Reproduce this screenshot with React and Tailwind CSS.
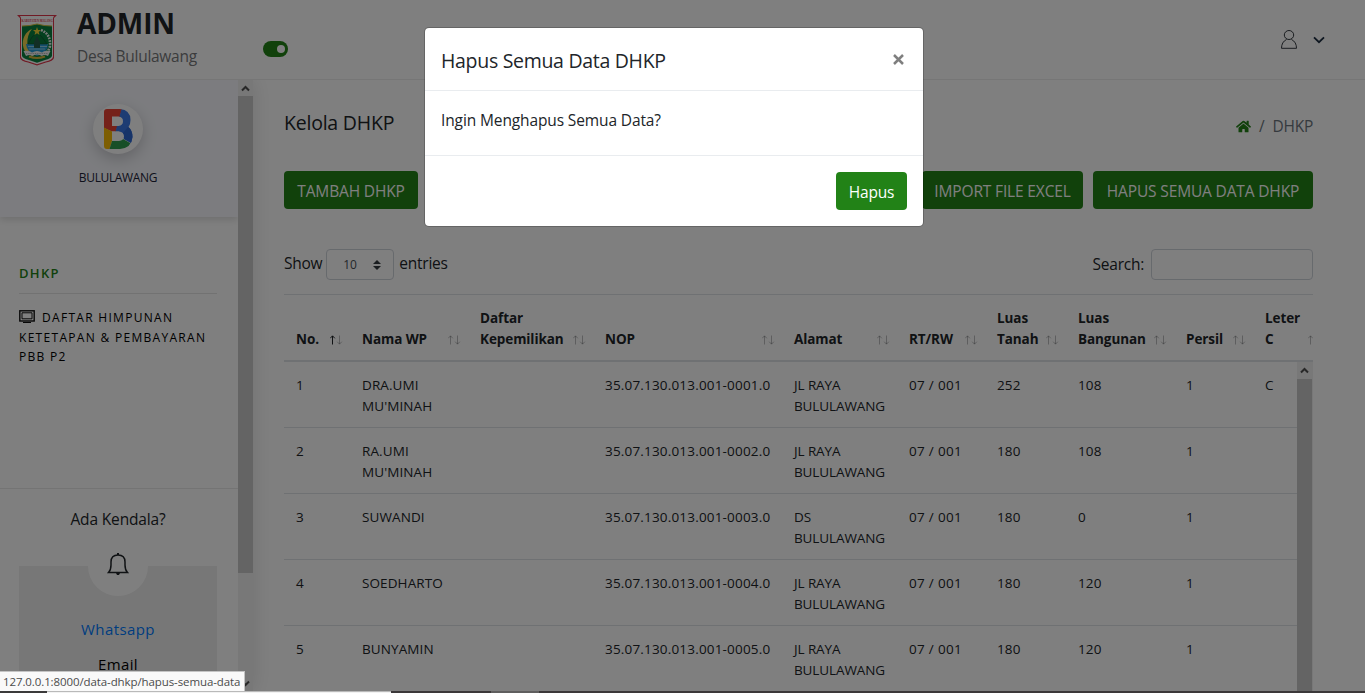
import React from "react";
import { FaHome } from "react-icons/fa";

const columns = [
  { label: "No.", active: true },
  { label: "Nama\u00a0WP" },
  { label: "Daftar Kepemilikan" },
  { label: "NOP" },
  { label: "Alamat" },
  { label: "RT/RW" },
  { label: "Luas Tanah" },
  { label: "Luas Bangunan" },
  { label: "Persil" },
  { label: "Leter C" },
];

const rows = [
  ["1", "DRA.UMI MU'MINAH", "", "35.07.130.013.001-0001.0", "JL RAYA BULULAWANG", "07 / 001", "252", "108", "1", "C"],
  ["2", "RA.UMI MU'MINAH", "", "35.07.130.013.001-0002.0", "JL RAYA BULULAWANG", "07 / 001", "180", "108", "1", ""],
  ["3", "SUWANDI", "", "35.07.130.013.001-0003.0", "DS BULULAWANG", "07 / 001", "180", "0", "1", ""],
  ["4", "SOEDHARTO", "", "35.07.130.013.001-0004.0", "JL RAYA BULULAWANG", "07 / 001", "180", "120", "1", ""],
  ["5", "BUNYAMIN", "", "35.07.130.013.001-0005.0", "JL RAYA BULULAWANG", "07 / 001", "180", "120", "1", ""],
];

const grid = "grid grid-cols-[66px_118px_125px_189px_115px_88px_81px_108px_79px_75px] w-[1044px]";

const cellClass = (i) => {
  if (i === 1) return "px-3 tracking-[0.1px]";
  if (i === 4) return "px-3 tracking-[-0.1px]";
  if (i === 3) return "pl-3 tracking-[0.18px] whitespace-nowrap";
  if (i === 5) return "pl-3 tracking-[0.3px] whitespace-nowrap";
  return "pl-3 tracking-[0.1px] whitespace-nowrap";
};

function Crest() {
  return (
    <svg viewBox="0 0 40 51" className="h-[51px] w-10">
      <path d="M0 0H40L37 3V43Q36 46 29 47.500L20 50.500L11 47.500Q4 46 3 43V3Z" fill="#e0374b" />
      <path d="M3 1H37L36 3V42Q35 45 28.500 46.500L20 49.200L11.500 46.500Q5 45 4 42V3Z" fill="#fff" />
      <text x="4.600" y="7.300" fontSize="4.800" fontWeight="bold" textLength="31" lengthAdjust="spacingAndGlyphs" fill="#e0374b" fontFamily="Liberation Serif, serif">KABUPATEN MALANG</text>
      <path d="M5 11Q13 11 20 9Q27 11 35 11V41Q34 43.500 28 45L20 47.800L12 45Q6 43.500 5 41Z" fill="#08803f" />
      <path d="M5 11Q13 11 20 9Q27 11 35 11" fill="none" stroke="#d6c13c" strokeWidth="1" />
      <path d="M15 14C5 18 3 32 10 38C12 40 15 41 17 41C9 36 8 22 15 14Z" fill="#f0d44e" />
      <path d="M24 15Q34 19 33 31Q32 35 30 37" fill="none" stroke="#f3f3f3" strokeWidth="2.600" strokeDasharray="1.800 1" />
      <path d="M9 29H31Q31 38 20 41Q10 38 9 29Z" fill="#2b9fd8" />
      <path d="M11 31.500H30M12 34H28" stroke="#bfe6f5" strokeWidth=".7" />
      <path d="M11 29L15 22L20 17.500L25 22L30 29Z" fill="#0b7a3c" stroke="#124d2c" strokeWidth=".6" />
      <path d="M17 33V27L20 21L23 27V33Z" fill="#245c4a" />
      <path d="M20 12L21 15L24 15L21.700 17L22.500 20L20 18.200L17.500 20L18.300 17L16 15L19 15Z" fill="#f3d434" />
      <path d="M6.500 36Q13 35 15 37.500Q20 34.500 25 37.500Q27 35 33.500 36L31 41Q27 39 25 41Q20 38 15 41Q13 39 9 41Z" fill="#f4f4f4" />
      <path d="M9 38.500H31" stroke="#888" strokeWidth=".6" strokeDasharray="1 .8" />
      <path d="M12 41.500Q20 44.500 28 41.500" fill="none" stroke="#d6b83a" strokeWidth="2" />
    </svg>
  );
}

function BrandB() {
  return (
    <svg viewBox="0 0 29 40" className="h-10 w-[29px]">
      <clipPath id="brand-b">
        <path clipRule="evenodd" d="M3 0H16Q26.500 1 26.500 11Q26.500 15.500 24.500 18Q28.500 21.500 28.500 28Q27.500 39 16 40H3Q0 40 0 37V3Q0 0 3 0ZM8 7.500V17H14.500Q19 16.500 19 12.200Q19 8 14.500 7.500ZM8 22.500V32H15Q20 31.500 20 27.200Q20 23 15 22.500Z" />
      </clipPath>
      <g clipPath="url(#brand-b)">
        <path d="M0 0H18L12 22.500H8L0 19Z" fill="#ea4335" />
        <path d="M17.500 0H29V35L20 30L15 22.500H11.500Z" fill="#3b78e7" />
        <path d="M24 18L29 20V35L20 30L19 24Z" fill="#2f68d2" />
        <path d="M0 18.500L8 22.500V32L5.500 40H0Z" fill="#fbbc05" />
        <path d="M8 32L19 30L27 34.500L24 40H5.500Z" fill="#2f9e4f" />
      </g>
    </svg>
  );
}

function UpArrow() {
  return (
    <svg viewBox="0 0 9 7" className="h-[7px] w-[9px]">
      <path d="M1 5.500L4.500 2L8 5.500" fill="none" stroke="#505050" strokeWidth="2" />
    </svg>
  );
}

function SortArrows({ active }) {
  return (
    <svg viewBox="0 0 13 10" className="h-[10px] w-[13px]" fill="none" stroke="#212529">
      <path d="M2.500 9.500V1M.2 3.300L2.500 .8L4.800 3.300" strokeOpacity={active ? 1 : 0.3} />
      <path d="M9.500 .5V9M7.200 6.700L9.500 9.200L11.800 6.700" strokeOpacity=".3" />
    </svg>
  );
}

function Header() {
  return (
    <header className="flex h-20 shrink-0 items-start border-b border-[#ededed] bg-white">
      <div className="pt-[15px] pl-[17px]"><Crest /></div>
      <div className="ml-5 w-[186px] pt-[6px]">
        <h1 className="text-[28px] leading-[34px] font-bold tracking-[-0.1px]">ADMIN</h1>
        <p className="mt-1 text-[15.500px] leading-6 tracking-[-0.28px] text-[#77797b]">Desa Bululawang</p>
      </div>
      <div className="mt-[41px] flex h-4 w-[25px] items-center justify-end rounded-full bg-[#228217] pr-[3px]">
        <span className="size-2 rounded-full bg-white" />
      </div>
      <div className="mt-[30px] mr-10 ml-auto flex items-center gap-4">
        <svg viewBox="0 0 16 19" className="mb-px h-[19px] w-4" fill="none" stroke="#343a40">
          <ellipse cx="8" cy="5" rx="4.700" ry="4.500" />
          <path d="M5.500 9.500Q.5 12 .5 18.300H15.500Q15.500 12 10.500 9.500" />
        </svg>
        <svg viewBox="0 0 12 8" className="mb-px h-2 w-3" fill="none" stroke="#1c2d41" strokeWidth="1.800">
          <path d="M1 1.300L6 6.200L11 1.300" />
        </svg>
      </div>
    </header>
  );
}

function Sidebar() {
  return (
    <aside className="relative flex w-[253px] shrink-0 shadow-[0_0_20px_rgba(0,0,0,0.12)]">
      <div className="w-[238px] overflow-hidden bg-white">
        <div className="flex h-[137px] flex-col items-center bg-[#f8f9fe] pr-[2px] shadow-[0_3px_7px_rgba(0,0,0,0.13)]">
          <div className="mt-6 flex size-[50px] items-center justify-center rounded-full bg-white shadow-[0_5px_15px_rgba(0,0,0,0.2)]">
            <BrandB />
          </div>
          <p className="mt-[15px] text-xs leading-[18px] tracking-[-0.35px] text-[#1d2338]">BULULAWANG</p>
        </div>
        <nav className="h-[271px] pt-[46px] pr-[21px] pl-[19px]">
          <h2 className="border-b border-[#e4e4e4] pb-[10px] text-[13px] leading-5 font-semibold tracking-[1.3px] text-[#228217]">DHKP</h2>
          <p className="pt-[14px] text-xs leading-[19.500px] tracking-[1.3px] whitespace-nowrap text-black">
            <svg viewBox="0 0 16 13" className="mr-[7px] inline h-[13px] w-4 align-[-1px]" fill="none" stroke="#111">
              <rect x=".8" y=".8" width="14.400" height="10.200" strokeWidth="1.400" />
              <path d="M3 2.800H13V8.800H3ZM4 12.500H12" />
            </svg>
            DAFTAR HIMPUNAN<br />KETETAPAN &amp; PEMBAYARAN<br />PBB P2
          </p>
        </nav>
        <div className="border-t border-[#e8e8e8] pr-[21px] pl-[19px] text-center">
          <p className="mt-[18px] text-[15.500px] leading-6 tracking-[-0.15px]">Ada Kendala?</p>
          <div className="mt-[35px] h-40 bg-[#eeeeee]">
            <div className="mx-auto flex size-[60px] -translate-y-[30px] items-center justify-center rounded-full bg-white">
              <svg viewBox="0 0 22 22" className="mb-1 size-[22px]" fill="none" stroke="#212529" strokeWidth="1.500">
                <path d="M1.500 19.500Q4 17 4 12V9Q4 2 11 2Q18 2 18 9V12Q18 17 20.500 19.500Z" />
                <path d="M10 1H12" strokeWidth="2" />
                <path d="M9 20H13L12 22H10Z" fill="#212529" stroke="none" />
              </svg>
            </div>
            <p className="-mt-[9px] text-[15px] leading-6 tracking-[0.4px] text-[#007bff]">Whatsapp</p>
            <p className="mt-[11px] text-[15px] leading-6 tracking-[0.4px] text-black">Email</p>
          </div>
        </div>
      </div>
      <div className="flex w-[15px] flex-col items-center bg-[#f1f1f1]">
        <div className="flex h-4 shrink-0 items-center"><UpArrow /></div>
        <div className="h-[477px] w-full shrink-0 bg-[#c9c9c9]" />
        <div className="mt-auto mb-1 rotate-180"><UpArrow /></div>
      </div>
    </aside>
  );
}

function ActionButton({ children, className }) {
  return (
    <button className={"h-[38px] shrink-0 rounded-[4px] bg-[#228217] pt-[3px] text-[15.500px] tracking-[-0.15px] whitespace-nowrap text-white " + className}>
      {children}
    </button>
  );
}

function DataTable() {
  return (
    <div className="flex min-h-0 grow flex-col overflow-hidden">
      <div className="shrink-0 overflow-hidden border-t border-b-2 border-t-[#dee2e6] border-b-[#dee2e6]">
        <div className={grid + " h-[65px]"}>
          {columns.map((c) => (
            <div key={c.label} className="flex items-end justify-between pr-[7px] pb-[10px] pl-3">
              <span className="w-min text-[13.500px] leading-[21px] font-bold tracking-[-0.08px]">{c.label}</span>
              <span className="flex h-[21px] shrink-0 items-center"><SortArrows active={c.active} /></span>
            </div>
          ))}
        </div>
      </div>
      <div className="flex min-h-0 grow overflow-hidden">
        <div className="w-[1013px] overflow-hidden">
          {rows.map((r) => (
            <div key={r[0]} className={grid + " h-[66px] border-b border-[#dee2e6] pt-[13px] text-[13.500px] leading-[21px]"}>
              {r.map((v, i) => (
                <div key={i} className={cellClass(i)}>{v}</div>
              ))}
            </div>
          ))}
        </div>
        <div className="flex w-4 flex-col bg-[#f1f1f1]">
          <div className="flex h-[17px] w-[15px] shrink-0 items-center justify-center"><UpArrow /></div>
          <div className="w-[15px] grow bg-[#c9c9c9]" />
        </div>
      </div>
    </div>
  );
}

function Main() {
  return (
    <main className="flex min-w-0 grow flex-col pr-[52px] pl-[31px]">
      <div className="flex h-[91px] shrink-0 justify-between">
        <h2 className="pt-7 text-[19.500px] leading-[29px] tracking-[-0.22px]">Kelola DHKP</h2>
        <div className="mt-[35px] flex h-6 items-center text-[15.500px] tracking-[-0.25px] text-[#6c757d]">
          <FaHome className="mb-px size-[15px] text-[#228217]" />
          <span className="mx-2">/</span>
          <span>DHKP</span>
        </div>
      </div>
      <div className="flex shrink-0 justify-between">
        <ActionButton className="w-[134px]">TAMBAH DHKP</ActionButton>
        <div className="flex gap-[10px]">
          <ActionButton className="w-[161px]">IMPORT FILE EXCEL</ActionButton>
          <ActionButton className="w-[220px]">HAPUS SEMUA DATA DHKP</ActionButton>
        </div>
      </div>
      <div className="mt-10 mb-[14px] flex h-[31px] shrink-0 items-center justify-between text-[15.500px] tracking-[-0.25px]">
        <div className="flex items-center">
          <span className="pb-px">Show</span>
          <div className="mr-[5px] ml-1 flex h-[31px] w-[68px] items-center justify-between rounded-[4px] border border-[#ced4da] pt-px pr-3 pl-4 text-xs text-[#495057]">
            10
            <svg viewBox="0 0 8 10" className="h-[10px] w-2" fill="#343a40"><path d="M0 4L4 0L8 4ZM0 6H8L4 10Z" /></svg>
          </div>
          <span className="pb-px">entries</span>
        </div>
        <div className="flex items-center gap-[7px]">
          <span>Search:</span>
          <div className="h-[31px] w-[162px] rounded-[4px] border border-[#ced4da]" />
        </div>
      </div>
      <DataTable />
    </main>
  );
}

function DeleteDialog() {
  return (
    <div className="h-[200px] w-[500px] overflow-hidden rounded-[5px] border border-black/20 bg-white bg-clip-padding">
      <div className="flex h-[63px] items-center justify-between border-b border-[#e9ecef] px-4">
        <h3 className="pt-[3px] text-[19.500px] leading-[30px] tracking-[-0.3px]">Hapus Semua Data DHKP</h3>
        <svg viewBox="0 0 11 11" className="mr-[3px] size-[11px]"><path d="M1 1L10 10M10 1L1 10" stroke="#7f7f7f" strokeWidth="2.500" /></svg>
      </div>
      <div className="h-[65px] border-b border-[#e9ecef] px-4 pt-[17px] text-[15.500px] leading-6 tracking-[-0.12px]">
        Ingin Menghapus Semua Data?
      </div>
      <div className="flex justify-end p-4">
        <button className="h-[38px] w-[71px] rounded-[4px] bg-[#228217] pt-1 text-[15.500px] tracking-[-0.15px] text-white">Hapus</button>
      </div>
    </div>
  );
}

export default function App() {
  return (
    <div className="relative h-[693px] w-[1365px] overflow-hidden bg-white font-['Open_Sans','Noto_Sans',sans-serif] text-[#212529]">
      <div className="flex h-[691px] flex-col overflow-hidden">
        <Header />
        <div className="flex min-h-0 grow overflow-hidden">
          <Sidebar />
          <Main />
        </div>
      </div>
      <div className="absolute inset-0 flex items-start justify-center bg-black/50 pt-[27px] pr-[17px]">
        <DeleteDialog />
      </div>
      <div className="absolute inset-x-0 bottom-0 flex h-[2px]">
        <div className="w-[47px] bg-[#3b3a3a]" />
        <div className="w-[344px] border-t border-[#b9b9b9] bg-[#f2f2f2]" />
        <div className="w-[100px] bg-[#3b3839]" />
        <div className="w-12 bg-[#5f5e5e]" />
        <div className="grow bg-[#3b3839]" />
      </div>
      <div className="absolute bottom-[2px] left-0 flex h-5 w-[245px] items-center border-t border-r border-[#c4c4c4] bg-[#f9f9f9] pt-px pl-[3px] text-[11.500px] tracking-[-0.1px] whitespace-nowrap text-[#4b4b4b]">
        127.0.0.1:8000/data-dhkp/hapus-semua-data
      </div>
    </div>
  );
}
